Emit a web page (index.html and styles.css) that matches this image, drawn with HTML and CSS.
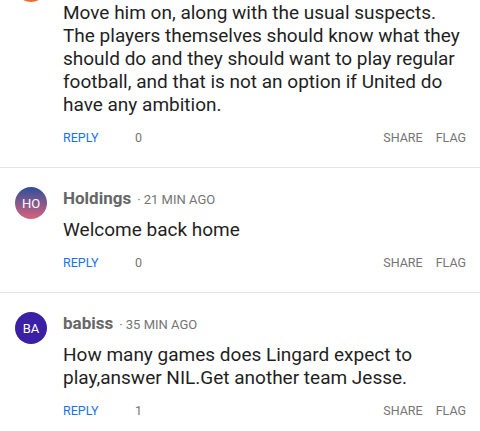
FILE: index.html
```html
<!DOCTYPE html>
<html lang="en">
<head>
    <meta charset="UTF-8">
    <title>Comments</title>
    <link rel="stylesheet" href="styles.css">
</head>
<body>

<div class="comments">
    <div class="comment">
        <div class="avatar orange"></div>
        <div class="content">
            <div class="header"></div>
            <p class="text">Move him on, along with the usual suspects. The players themselves should know what they should do and they should want to play regular football, and that is not an option if United do have any ambition.</p>
            <div class="actions">
                <span class="reply">REPLY</span>
                <span class="count">0</span>
                <span class="share">SHARE</span>
                <span class="flag">FLAG</span>
            </div>
        </div>
    </div>

    <div class="comment">
        <div class="avatar ho">HO</div>
        <div class="content">
            <div class="header"><span class="name">Holdings</span><span class="time">· 21 MIN AGO</span></div>
            <p class="text">Welcome back home</p>
            <div class="actions">
                <span class="reply">REPLY</span>
                <span class="count">0</span>
                <span class="share">SHARE</span>
                <span class="flag">FLAG</span>
            </div>
        </div>
    </div>

    <div class="comment">
        <div class="avatar ba">BA</div>
        <div class="content">
            <div class="header"><span class="name">babiss</span><span class="time">· 35 MIN AGO</span></div>
            <p class="text">How many games does Lingard expect to play,answer NIL.Get another team Jesse.</p>
            <div class="actions">
                <span class="reply">REPLY</span>
                <span class="count">1</span>
                <span class="share">SHARE</span>
                <span class="flag">FLAG</span>
            </div>
        </div>
    </div>
</div>

</body>
</html>
```

FILE: styles.css
```css
body {
    margin: 0;
    background-color: white;
    font-family: Roboto, "Liberation Sans", Arial, sans-serif;
    overflow: hidden;
}

.comments {
    margin-top: -49px;
}

.comment {
    display: flex;
    gap: 16px;
    padding: 18px 14px 18px 15px;
    border-bottom: 1px solid #e4e4e4;
}

.avatar {
    flex: none;
    width: 32px;
    height: 32px;
    margin-top: 1px;
    border-radius: 50%;
    color: white;
    font-size: 13px;
    display: flex;
    align-items: center;
    justify-content: center;
}

.orange {
    background-color: #f26a2e;
}

.ho {
    background: linear-gradient(to bottom, #2d4f9c, #d9627a);
}

.ba {
    background-color: #3b20a6;
}

.content {
    flex: 1;
}

.header {
    height: 24px;
    display: flex;
    align-items: center;
}

.name {
    font-size: 17px;
    font-weight: bold;
    color: #666666;
}

.time {
    font-size: 13px;
    color: #757575;
    margin-left: 6px;
    margin-top: 2px;
}

.text {
    margin: 8px 0 0;
    font-size: 19px;
    line-height: 23px;
    color: #1f1f1f;
}

.actions {
    margin-top: 9px;
    height: 24px;
    display: flex;
    align-items: center;
    font-size: 12.5px;
    color: #757575;
}

.reply {
    color: #1a73e8;
    width: 72px;
}

.share {
    margin-left: auto;
}

.flag {
    margin-left: 13px;
}
```
